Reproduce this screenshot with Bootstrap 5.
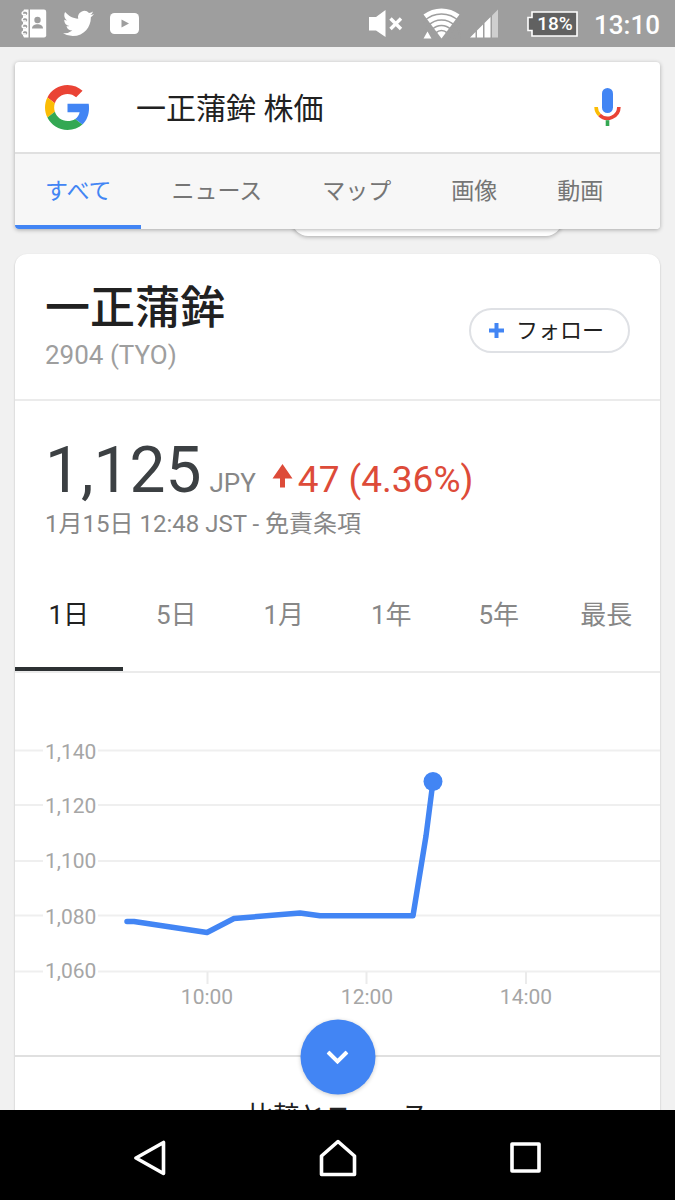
<!DOCTYPE html>
<html lang="ja">
<head>
<meta charset="utf-8">
<meta name="viewport" content="width=device-width, initial-scale=1">
<title>一正蒲鉾 株価</title>
<link href="https://cdn.jsdelivr.net/npm/bootstrap@5.3.0/dist/css/bootstrap.min.css" rel="stylesheet">
<style>
  body { font-family: Roboto, "Noto Sans CJK JP", sans-serif; background: #f1f1f1; color: #212121; }
  a { color: inherit; text-decoration: none; }
  svg { display: block; flex: none; }
  .status-bar { height: 47px; padding: 0 15px 0 20px; background: #9e9e9e; color: #fff; }
  .status-bar .clock { font-size: 26px; font-weight: 500; line-height: 44px; padding-top: 3px; }
  .wifi { margin-left: 20px; }
  .cell { margin-left: 9px; }
  .battery { margin-left: 28px; }
  .feed { padding: 15px 15px 0; min-height: 0; }
  .search-panel { z-index: 2; border-radius: 4px; background: #fff; box-shadow: 0 1px 4px rgba(0,0,0,.3); }
  .search-row { height: 90px; padding: 0 36px 0 30px; gap: 46px; }
  .search-row input { font-size: 30px; color: #212121; padding: 4px 0 0; line-height: 44px; }
  .kinds { background: #f7f7f7; border-top: 2px solid #e0e0e0; border-radius: 0 0 4px 4px; color: #757575; }
  .kinds a { font-size: 23px; line-height: 76px; padding: 0 30px; border-bottom: 4px solid transparent; height: 75px; }
  .kinds a.active { color: #4285f4; border-color: #4285f4; border-radius: 0 0 0 4px; }
  .tooltip-tail { left: 277px; right: 98px; bottom: -7px; height: 40px; z-index: 1; border-radius: 16px; background: #fff; box-shadow: 0 1px 4px rgba(0,0,0,.3); }
  .quote { margin-top: 25px; background: #fff; border-radius: 12px 12px 0 0; box-shadow: 0 1px 2px rgba(0,0,0,.25); }
  .quote-head { height: 147px; padding: 0 30px; border-bottom: 2px solid #ebebeb; }
  .quote-head h1 { font-size: 45px; line-height: 56px; font-weight: 500; }
  .quote-head .ticker { font-size: 26px; line-height: 36px; color: #9e9e9e; }
  .follow { height: 45px; padding: 0 24px 0 18px; gap: 12px; margin-top: 8px; border: 2px solid #dfe1e5; border-radius: 23px; background: #fff; color: #212121; font-size: 22px; line-height: 40px; }
  .price-block { padding: 30px 30px 0; height: 159px; color: #878787; }
  .price { font-size: 64px; line-height: 80px; color: #3c4043; }
  .currency { font-size: 26px; margin-left: 8px; }
  .change { font-size: 37px; color: #dd4b39; margin-left: 16px; }
  .change svg { display: inline-block; vertical-align: baseline; margin: 0 5px 4px 0; }
  .stamp { font-size: 24px; line-height: 26px; }
  .ranges { border-bottom: 2px solid #ebebeb; color: #878787; }
  .ranges button { flex: 1 1 0; height: 111px; padding: 4px 0 0; border: 0; border-bottom: 4px solid transparent; background: none; color: inherit; font-size: 26px; }
  .ranges button.active { color: #212121; border-color: #2d3133; }
  .chart { border-bottom: 2px solid #e0e0e0; }
  .chart svg { width: 100%; height: auto; }
  .chart text { font-size: 21px; fill: #a6a6a6; }
  .more { left: 50%; bottom: -2px; width: 75px; height: 75px; transform: translate(-50%, 50%); border: 0; background: #4285f4; box-shadow: 0 1px 4px rgba(0,0,0,.2); }
  .next-title { font-size: 26px; line-height: 38px; padding-top: 40px; }
  .nav-keys { height: 90px; background: #000; padding: 5px 56px 0; }
  .nav-keys button { flex: 1 1 0; border: 0; background: none; padding: 0; }
</style>
</head>
<body class="vh-100 d-flex flex-column overflow-hidden">

<header class="status-bar d-flex align-items-center flex-shrink-0">
  <svg width="27" height="29" viewBox="0 0 27 29" aria-hidden="true">
    <path fill="#fff" d="M10 .500H24A2.200 2.200 0 0 1 26.200 2.700V26.300A2.200 2.200 0 0 1 24 28.500H10z"/>
    <path fill="#fff" d="M4 .500H8.500V28.500H4L3 26.500V2.500z"/>
    <path fill="none" stroke="#9e9e9e" stroke-width="3.600" stroke-linecap="round" d="M1 4.500H5.500M1 11H5.500M1 17.500H5.500M1 24H5.500"/>
    <path fill="none" stroke="#fff" stroke-width="1.500" stroke-linecap="round" d="M5.500 5.500H3A1.500 1.500 0 0 1 3 2.800M5.500 12H3A1.500 1.500 0 0 1 3 9.300M5.500 18.500H3A1.500 1.500 0 0 1 3 15.800M5.500 25H3A1.500 1.500 0 0 1 3 22.300"/>
    <circle cx="17.500" cy="11" r="3.200" fill="#9e9e9e"/><path fill="#9e9e9e" d="M12 19.500c0-3 3-4.300 5.500-4.300s5.500 1.300 5.500 4.300z"/>
  </svg>
  <svg class="ms-3" width="31" height="31" viewBox="0 0 24 24" aria-hidden="true"><path fill="#fff" d="M23.953 4.570a10 10 0 01-2.825.775 4.958 4.958 0 002.163-2.723c-.951.555-2.005.959-3.127 1.184a4.920 4.920 0 00-8.384 4.482C7.690 8.095 4.067 6.130 1.640 3.162a4.822 4.822 0 00-.666 2.475c0 1.710.870 3.213 2.188 4.096a4.904 4.904 0 01-2.228-.616v.060a4.923 4.923 0 003.946 4.827 4.996 4.996 0 01-2.212.085 4.936 4.936 0 004.604 3.417 9.867 9.867 0 01-6.102 2.105c-.390 0-.779-.023-1.170-.067a13.995 13.995 0 007.557 2.209c9.053 0 13.998-7.496 13.998-13.985 0-.210 0-.420-.015-.630A9.935 9.935 0 0024 4.590z"/></svg>
  <svg class="ms-3" width="29" height="21" viewBox="0 0 29 21" aria-hidden="true"><rect width="29" height="21" rx="4.500" fill="#fff"/><path fill="#9e9e9e" d="M11.500 6.500v8l7.500-4z"/></svg>

  <svg class="ms-auto" width="34" height="28" viewBox="0 0 34 28" aria-hidden="true"><path fill="#fff" d="M0 7H7L16.500 0V27L7 20.500H0z"/><path d="M21.500 8.500l10.500 10.500M32 8.500L21.500 19" stroke="#fff" stroke-width="3.400"/></svg>
  <svg class="wifi" width="38" height="31" viewBox="0 0 38 31" aria-hidden="true">
    <path fill="#fff" d="M18.500 30.500L.500 6.500A30 30 0 0 1 36.500 6.500z"/>
    <g fill="none" stroke="#9e9e9e" stroke-width="1.600"><circle cx="18.500" cy="30.500" r="24.500"/><circle cx="18.500" cy="30.500" r="18.500"/><circle cx="18.500" cy="30.500" r="13"/><circle cx="18.500" cy="30.500" r="8"/></g>
    <path fill="#9e9e9e" d="M-1 31L4 21.500 9 25 11 31z"/><path fill="#fff" d="M.500 30.500L4.500 23.500 8.500 30.500z"/>
  </svg>
  <svg class="cell" width="29" height="29" viewBox="0 0 29 29" aria-hidden="true"><path fill="#fff" d="M0 28.500L5.500 23V28.500zM7 28.500V21.500L13 15.500V28.500zM14.500 28.500V14L20.500 8V28.500z"/><path fill="#cfcfcf" d="M22 28.500V6.500L28 .500V28.500z"/></svg>
  <svg class="battery" width="51" height="26" viewBox="0 0 51 26" role="img" aria-label="18%"><path fill="#616161" stroke="#fff" stroke-width="1.600" d="M5 1H50V25H5V19.500H1V6.500H5z"/><text x="28" y="19" text-anchor="middle" font-size="19" font-weight="500" fill="#fff">18%</text></svg>
  <span class="clock ms-3">13:10</span>
</header>

<main class="feed flex-fill overflow-hidden">
  <div class="position-relative">
    <div class="tooltip-tail position-absolute"></div>
    <div class="search-panel position-relative">
      <form class="search-row d-flex align-items-center" role="search">
        <svg width="45" height="45" viewBox="0 0 48 48" role="img" aria-label="Google">
          <path fill="#EA4335" d="M24 9.500c3.540 0 6.710 1.220 9.210 3.600l6.850-6.850C35.900 2.380 30.470 0 24 0 14.620 0 6.510 5.380 2.560 13.220l7.980 6.190C12.430 13.720 17.740 9.500 24 9.500z"/>
          <path fill="#4285F4" d="M46.980 24.550c0-1.570-.150-3.090-.380-4.550H24v9.020h12.940c-.580 2.960-2.260 5.480-4.780 7.180l7.730 6c4.510-4.180 7.090-10.360 7.090-17.650z"/>
          <path fill="#FBBC05" d="M10.530 28.590c-.480-1.450-.760-2.990-.760-4.590s.270-3.140.760-4.590l-7.980-6.190C.920 16.460 0 20.120 0 24c0 3.880.920 7.540 2.560 10.780l7.970-6.190z"/>
          <path fill="#34A853" d="M24 48c6.480 0 11.930-2.130 15.890-5.810l-7.730-6c-2.150 1.450-4.920 2.300-8.160 2.300-6.260 0-11.570-4.220-13.470-9.910l-7.980 6.190C6.510 42.620 14.620 48 24 48z"/>
        </svg>
        <input class="form-control border-0 shadow-none bg-transparent" type="text" value="一正蒲鉾 株価" aria-label="検索">
        <button class="btn p-0 border-0" type="button" aria-label="音声検索">
          <svg width="33" height="39" viewBox="0 0 33 39">
            <rect x="11" y="0" width="11" height="25" rx="5.500" fill="#4285f4"/>
            <path d="M27.900 19a11.400 11.400 0 0 1-19.400 8" fill="none" stroke="#ea4335" stroke-width="3.600"/>
            <path d="M5.100 19a11.400 11.400 0 0 0 3.400 8" fill="none" stroke="#fbbc05" stroke-width="3.600"/>
            <path d="M14.700 32.200h3.600V38h-3.600z" fill="#34a853"/>
          </svg>
        </button>
      </form>
      <nav class="kinds d-flex" aria-label="検索の種類">
        <a href="#" class="active" aria-current="page">すべて</a>
        <a href="#">ニュース</a>
        <a href="#">マップ</a>
        <a href="#">画像</a>
        <a href="#">動画</a>
      </nav>
    </div>
  </div>

  <article class="quote">
    <div class="quote-head d-flex justify-content-between align-items-center">
      <div>
        <h1 class="mb-0">一正蒲鉾</h1>
        <div class="ticker">2904 (TYO)</div>
      </div>
      <button class="follow d-flex align-items-center" type="button">
        <svg width="15" height="15" viewBox="0 0 15 15"><path d="M7.500 0v15M0 7.500h15" stroke="#4285f4" stroke-width="4"/></svg>フォロー
      </button>
    </div>

    <div class="price-block">
      <div class="d-flex align-items-baseline">
        <span class="price">1,125</span>
        <span class="currency">JPY</span>
        <span class="change"><svg width="21" height="24" viewBox="0 0 21 24"><path fill="#dd4b39" d="M10.500 0L20.500 14.500H13V23.500H8V14.500H.500z"/></svg>47 (4.36%)</span>
      </div>
      <div class="stamp">1月15日 12:48 JST - <a href="#">免責条項</a></div>
    </div>

    <div class="ranges d-flex" role="group" aria-label="期間">
      <button class="active" type="button">1日</button>
      <button type="button">5日</button>
      <button type="button">1月</button>
      <button type="button">1年</button>
      <button type="button">5年</button>
      <button type="button">最長</button>
    </div>

    <div class="chart position-relative">
      <svg viewBox="0 0 645 382" role="img" aria-label="株価チャート">
        <path d="M0 77.500H645M0 132H645M0 188H645M0 242.500H645M0 298.500H645" stroke="#efefef" stroke-width="2"/>
        <path d="M192.500 299V311M351.500 299V311M511 299V311" stroke="#ebebeb" stroke-width="2"/>
        <path d="M28 70H83V310H28z" fill="#fff"/>
        <g>
          <text x="30" y="86">1,140</text>
          <text x="30" y="140">1,120</text>
          <text x="30" y="195">1,100</text>
          <text x="30" y="251">1,080</text>
          <text x="30" y="305">1,060</text>
        </g>
        <g text-anchor="middle">
          <text x="192" y="331">10:00</text>
          <text x="352" y="331">12:00</text>
          <text x="511" y="331">14:00</text>
        </g>
        <path d="M112 248.500L119 248.500L192 259.500L219 245.500L285 240L305 242.800H398L411 163L418 108.500" fill="none" stroke="#4285f4" stroke-width="5.500" stroke-linecap="round" stroke-linejoin="round"/>
        <circle cx="418" cy="108.500" r="9.500" fill="#4285f4"/>
      </svg>
      <button class="more position-absolute rounded-circle d-flex align-items-center justify-content-center" type="button" aria-label="もっと見る">
        <svg style="width:22px" viewBox="0 0 22 14"><path d="M1.500 1.500L11 11L20.500 1.500" fill="none" stroke="#fff" stroke-width="4"/></svg>
      </button>
    </div>

    <h2 class="next-title text-center fw-normal mb-0">比較とニュース</h2>
  </article>
</main>

<footer class="nav-keys d-flex align-items-center flex-shrink-0">
  <button class="d-flex justify-content-center" type="button" aria-label="戻る"><svg width="32" height="36" viewBox="0 0 32 36"><path d="M29.500 2.500V33.500L2 18z" fill="none" stroke="#fff" stroke-width="3.600" stroke-linejoin="round"/></svg></button>
  <button class="d-flex justify-content-center" type="button" aria-label="ホーム"><svg width="38" height="38" viewBox="0 0 38 38"><path d="M2.500 35.500V17L19 2.500L35.500 17V35.500z" fill="none" stroke="#fff" stroke-width="3.600" stroke-linejoin="round"/></svg></button>
  <button class="d-flex justify-content-center" type="button" aria-label="履歴"><svg width="31" height="31" viewBox="0 0 31 31"><path d="M2 2H29V29H2z" fill="none" stroke="#fff" stroke-width="3.600" stroke-linejoin="round"/></svg></button>
</footer>

<script src="https://cdn.jsdelivr.net/npm/bootstrap@5.3.0/dist/js/bootstrap.bundle.min.js"></script>
</body>
</html>
